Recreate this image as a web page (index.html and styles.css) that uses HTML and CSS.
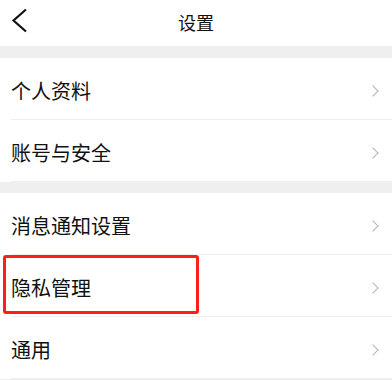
FILE: index.html
```html
<!DOCTYPE html>
<html lang="zh-CN">
<head>
  <meta charset="UTF-8">
  <meta name="viewport" content="width=device-width, initial-scale=1.0">
  <title>设置</title>
  <link rel="stylesheet" href="styles.css">
</head>
<body>
  <div class="nav__bar">
    <span class="nav__back">
      <svg width="18" height="26" viewBox="0 0 18 26">
        <path d="M15 1.5 L2.5 12.5 L15 23.5" fill="none" stroke="#111" stroke-width="2.2"/>
      </svg>
    </span>
    <h1 class="nav__title">设置</h1>
  </div>
  <div class="group">
    <div class="cell"><span class="cell__text">个人资料</span><span class="cell__arrow"></span></div>
    <div class="cell"><span class="cell__text">账号与安全</span><span class="cell__arrow"></span></div>
  </div>
  <div class="group">
    <div class="cell"><span class="cell__text">消息通知设置</span><span class="cell__arrow"></span></div>
    <div class="cell _marked"><span class="cell__text">隐私管理</span><span class="cell__arrow"></span></div>
    <div class="cell"><span class="cell__text">通用</span><span class="cell__arrow"></span></div>
  </div>
</body>
</html>
```

FILE: styles.css
```css
body {
  margin: 0;
  background: #efefef;
  font-family: "Noto Sans CJK SC", "Noto Sans", sans-serif;
  color: #111;
}

.nav__bar {
  position: relative;
  height: 46px;
  display: flex;
  align-items: center;
  justify-content: center;
  background: #fff;
}

.nav__back {
  position: absolute;
  left: 11px;
  top: 8px;
  display: flex;
}

.nav__title {
  margin: 0;
  font-size: 18px;
  font-weight: 400;
  line-height: 1;
  margin-top: -3px;
}

.group {
  margin-top: 12px;
  background: #fff;
  padding-left: 11px;
}

.group + .group {
  margin-top: 11px;
}

.cell {
  position: relative;
  height: 61px;
  display: flex;
  align-items: center;
  justify-content: space-between;
  border-bottom: 1px solid #eeeeee;
  padding-right: 15px;
}

.cell__text {
  font-size: 20px;
  line-height: 1;
  margin-top: 4px;
}

.cell__arrow {
  width: 7px;
  height: 7px;
  border-top: 1.5px solid #b4b4b4;
  border-right: 1.5px solid #b4b4b4;
  transform: rotate(45deg);
  margin-top: 4px;
}

.cell._marked::after {
  content: "";
  position: absolute;
  left: -8px;
  top: 0;
  width: 190px;
  height: 53px;
  border: 3px solid #ff1f1a;
  border-radius: 3px;
}
```
